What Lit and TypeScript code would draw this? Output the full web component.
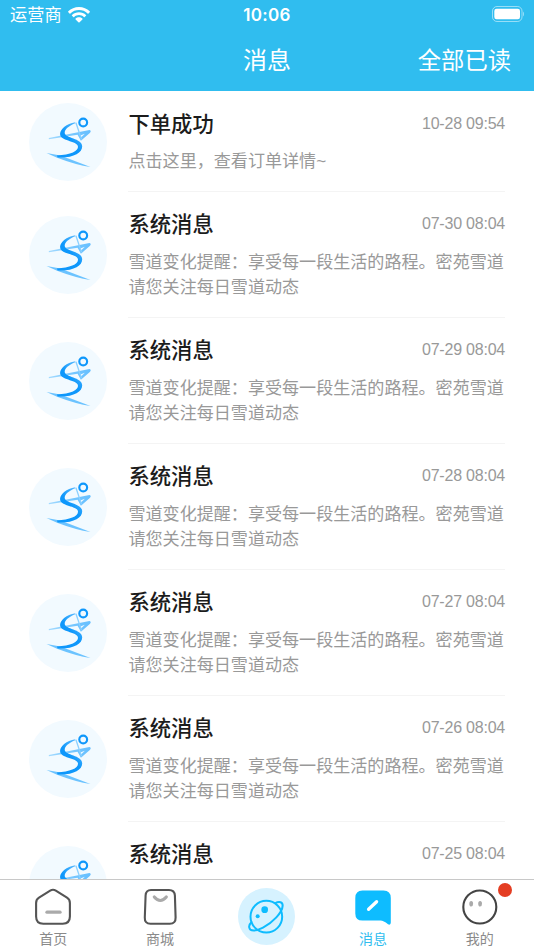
import { LitElement, html, css } from "lit";
import { customElement, property } from "lit/decorators.js";
import { classMap } from "lit/directives/class-map.js";

const fontStack = css`"Liberation Sans", "Noto Sans CJK SC", sans-serif`;

interface Message {
  title: string;
  time: string;
  lines: string[];
}

const snowReport = ["雪道变化提醒：享受每一段生活的路程。密苑雪道", "请您关注每日雪道动态"];

const messages: Message[] = [
  { title: "下单成功", time: "10-28 09:54", lines: ["点击这里，查看订单详情~"] },
  ...["07-30", "07-29", "07-28", "07-27", "07-26", "07-25"].map((day) => ({
    title: "系统消息",
    time: `${day} 08:04`,
    lines: snowReport,
  })),
];

@customElement("skier-avatar")
export class SkierAvatar extends LitElement {
  static styles = css`
    :host { display: block; width: 78px; height: 78px; }
    svg { display: block; }
  `;
  render() {
    return html`<svg width="78" height="78" viewBox="25 22 236 236" fill="none">
      <defs>
        <linearGradient id="pole" x1="85" y1="0" x2="212" y2="0" gradientUnits="userSpaceOnUse">
          <stop offset="0" stop-color="#a3daff" />
          <stop offset="0.600" stop-color="#74c6ff" />
          <stop offset="1" stop-color="#66bfff" />
        </linearGradient>
        <linearGradient id="body" x1="165" y1="80" x2="130" y2="110" gradientUnits="userSpaceOnUse">
          <stop offset="0" stop-color="#5cbbff" />
          <stop offset="1" stop-color="#0e97fb" />
        </linearGradient>
      </defs>
      <circle cx="143" cy="140" r="118" fill="#f2faff" />
      <path d="M85 128 L208 104 Q215 106 209 113 L182 136 L172 118 L85 132Z M180 120 L183 126 L194 115Z" fill="url(#pole)" fill-rule="evenodd" />
      <path d="M167 82 L184 132" stroke="#8bd0ff" stroke-width="4" />
      <path d="M78 173 L120 181 L211 216 Q168 210 110 188Z" fill="#6cc3ff" />
      <path d="M165 80 C138 85 120 100 119 115 C118 138 168 135 173 152 C176 168 151 178 109 181 L112 187 C160 189 186 173 186 153 C186 128 133 129 133 112 C133 101 144 92 165 83Z" fill="url(#body)" />
      <circle cx="189" cy="81" r="11.800" stroke="#0e97fb" stroke-width="6.500" />
    </svg>`;
  }
}

@customElement("message-row")
export class MessageRow extends LitElement {
  @property({ attribute: false }) message!: Message;

  static styles = css`
    :host { display: block; flex: none; }
    .row { display: flex; align-items: center; padding-left: 28.5px; padding-right: 29px; font-family: ${fontStack}; }
    .content { flex: 1; margin-left: 21.5px; padding: 17px 0 16px; border-bottom: 1px solid #f4f4f4; }
    .head { display: flex; justify-content: space-between; align-items: center; height: 32px; }
    .title { font-size: 21.3px; font-weight: 500; color: #1c1c1c; line-height: 32px; margin-left: 0.5px; }
    .time { font-size: 16px; letter-spacing: -0.22px; color: #999; line-height: 30px; height: 32px; }
    .text { margin-top: 9px; margin-left: 0.5px; font-size: 17.07px; line-height: 25.5px; color: #999; white-space: nowrap; }
    .single .content { padding-top: 18px; }
    .single .text { margin-top: 8px; }
    .single skier-avatar { margin-top: 2px; }
  `;
  render() {
    const m = this.message;
    return html`<div class=${classMap({ row: true, single: m.lines.length === 1 })}>
      <skier-avatar></skier-avatar>
      <div class="content">
        <div class="head"><span class="title">${m.title}</span><span class="time">${m.time}</span></div>
        <div class="text">${m.lines.map((line) => html`<div>${line}</div>`)}</div>
      </div>
    </div>`;
  }
}

@customElement("top-bar")
export class TopBar extends LitElement {
  static styles = css`
    :host { display: block; flex: none; height: 91px; background: #30bdef; color: #fff; font-family: ${fontStack}; }
    .status { display: grid; grid-template-columns: 1fr auto 1fr; align-items: center; height: 30px; padding: 0 10px; }
    .carrier { display: flex; align-items: center; gap: 7px; font-size: 17.2px; line-height: 29px; padding-top: 1px; }
    .carrier svg { margin-top: -2px; margin-left: -1px; }
    .clock { font-family: Inter, sans-serif; font-weight: 600; font-size: 17px; letter-spacing: 0.35px; }
    .battery { justify-self: end; display: block; margin-bottom: 2px; }
    .nav { display: grid; grid-template-columns: 1fr auto 1fr; align-items: center; height: 60px; padding: 1px 23px 0; }
    .nav h1 { grid-column: 2; margin: 0; font-size: 24px; font-weight: 400; line-height: 60px; }
    .action { justify-self: end; font-size: 23.3px; line-height: 60px; }
  `;
  render() {
    return html`<div class="status">
        <span class="carrier">运营商
          <svg width="22" height="16" viewBox="0 0 22 16" fill="#fff">
            <path d="M11 0C6.800 0 3 1.600.3 4.300c-.3.300-.3.600 0 .9l1.200 1.200c.3.300.6.300.9 0C4.700 4.200 7.700 3 11 3s6.300 1.200 8.600 3.400c.3.300.6.300.9 0l1.200-1.200c.3-.3.3-.6 0-.9C19 1.600 15.200 0 11 0z" />
            <path d="M11 5.200c-2.700 0-5.200 1-7 2.700-.3.300-.3.600 0 .9l1.300 1.200c.3.300.6.300.9 0C7.500 8.800 9.200 8.100 11 8.100s3.500.7 4.800 1.900c.3.300.6.300.9 0L18 8.800c.3-.3.3-.6 0-.9-1.800-1.700-4.300-2.700-7-2.700z" />
            <path d="M11 10.200c-1.300 0-2.500.5-3.400 1.300-.3.300-.3.600 0 .9l2.800 2.800c.4.400.8.400 1.200 0l2.800-2.800c.3-.3.3-.6 0-.9-.9-.8-2.100-1.300-3.400-1.300z" />
          </svg>
        </span>
        <span class="clock">10:06</span>
        <svg class="battery" width="34" height="16" viewBox="0 0 34 16">
          <rect x="2.500" y=".5" width="29.500" height="15" rx="4.500" fill="none" stroke="#fff" stroke-opacity=".5" />
          <rect x="4.300" y="2.700" width="25.700" height="10.600" rx="2.300" fill="#fff" />
          <path d="M33 5.500q1 .8 1 2.500t-1 2.500z" fill="#fff" opacity=".5" />
        </svg>
      </div>
      <div class="nav"><h1>消息</h1><span class="action">全部已读</span></div>`;
  }
}

@customElement("tab-bar")
export class TabBar extends LitElement {
  static styles = css`
    :host { display: grid; grid-template-columns: repeat(5, 1fr); flex: none; height: 71px; padding-right: 1px; box-sizing: border-box; background: #fff; border-top: 1px solid #c8c8c8; font-family: ${fontStack}; }
    .tab { display: flex; flex-direction: column; align-items: center; font-size: 14px; line-height: 20px; color: #8a8a8a; padding-top: 8px; }
    .tab svg { display: block; flex: none; margin-bottom: 3px; }
    .tab.active { color: #30bdef; }
    .face { position: relative; }
    .dot { position: absolute; left: 37px; top: -5px; width: 14px; height: 14px; border-radius: 50%; background: #e43d22; }
  `;
  render() {
    return html`
      <div class="tab">
        <svg width="38" height="38" viewBox="0 0 38 38" fill="none">
          <path d="M16.200 2.600Q19 .8 21.800 2.600L33 9.700Q35.900 11.500 35.900 15V28.500Q35.900 35.700 28.700 35.700H9.300Q2.100 35.700 2.100 28.500V15Q2.100 11.500 5 9.700Z" stroke="#555" stroke-width="2.100" />
          <path d="M13 24.200h13" stroke="#aaa" stroke-width="3.300" stroke-linecap="round" />
        </svg>首页
      </div>
      <div class="tab">
        <svg width="38" height="38" viewBox="0 0 38 38" fill="none">
          <path d="M10 2H28Q33.500 2 33.900 7.500L34.600 29.500Q34.800 35.700 28.800 35.700H9.500Q3.500 35.700 3.800 29.500L4.600 7.500Q4.900 2 10 2Z" stroke="#555" stroke-width="2.100" />
          <path d="M13.300 9q6 7 12 0" stroke="#aaa" stroke-width="3.200" stroke-linecap="round" />
        </svg>商城
      </div>
      <div class="tab">
        <svg width="57" height="57" viewBox="115 155 171 171" fill="none" stroke="#0ebcff" stroke-width="6">
          <circle cx="200.500" cy="240.500" r="85.500" fill="#d6f2ff" stroke="none" />
          <circle cx="200" cy="241" r="47.500" />
          <path d="M226 201C239 194 249 197 249 208C248 229 219 259 190 274C169 285 150 285 149 274C147 268 151 261 157 255" />
          <circle cx="195" cy="220" r="10" fill="#0ebcff" stroke="none" />
          <circle cx="174" cy="239.500" r="6" fill="#0ebcff" stroke="none" />
        </svg>
      </div>
      <div class="tab active">
        <svg width="38" height="38" viewBox="0 0 38 38" fill="none">
          <path d="M8.500 2.500H29.500Q36.800 2.500 36.800 10V34.500Q36.800 37.500 34 36.300Q29.500 32.600 26.500 32.600H8.500Q1.300 32.600 1.300 25.500V10Q1.300 2.500 8.500 2.500Z" fill="#0ebcff" />
          <path d="M14.600 21.300l8-7.600" stroke="#fff" stroke-width="3.300" stroke-linecap="round" />
        </svg>消息
      </div>
      <div class="tab">
        <div class="face">
          <svg width="38" height="38" viewBox="0 0 38 38" fill="none">
            <circle cx="18.800" cy="19" r="16.500" stroke="#444" stroke-width="2.100" />
            <ellipse cx="10.200" cy="15.700" rx="1.900" ry="2.800" fill="#aaa" />
            <ellipse cx="19.100" cy="15.700" rx="1.900" ry="2.800" fill="#aaa" />
          </svg>
          <span class="dot"></span>
        </div>我的
      </div>`;
  }
}

@customElement("app-root")
export class AppRoot extends LitElement {
  static styles = css`
    :host { display: flex; flex-direction: column; height: 950px; overflow: hidden; background: #fff; }
    .list { flex: 1; min-height: 0; overflow: hidden; display: flex; flex-direction: column; }
  `;
  render() {
    return html`<top-bar></top-bar>
      <div class="list">${messages.map((m) => html`<message-row .message=${m}></message-row>`)}</div>
      <tab-bar></tab-bar>`;
  }
}
